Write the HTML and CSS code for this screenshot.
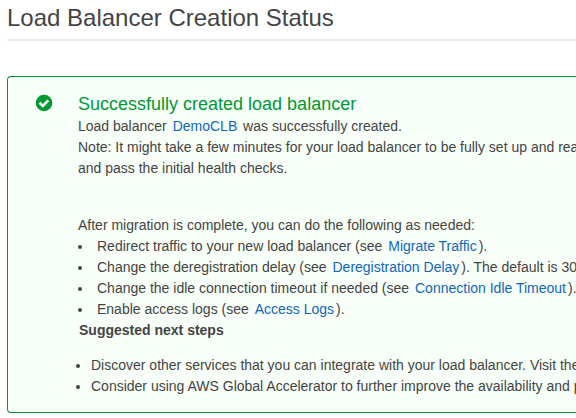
FILE: index.html
```html
<!DOCTYPE html>
<html lang="en">
<head>
<meta charset="utf-8">
<title>Load Balancer Creation Status</title>
<link rel="stylesheet" href="styles.css">
</head>
<body>
<h1 class="title">Load Balancer Creation Status</h1>
<section class="alert">
  <svg class="alert-icon" viewBox="0 0 18 18"><circle cx="9" cy="9" r="8.300"/><path d="M4.600 8.800l3.200 3.100 5.500-5.600"/></svg>
  <div class="alert-body">
    <h2 class="heading">Successfully created load balancer</h2>
    <p>Load balancer <a>DemoCLB</a> was successfully created.</p>
    <p>Note: It might take a few minutes for your load balancer to be fully set up and ready to route traffic,</p>
    <p>and pass the initial health checks.</p>
    <p class="after">After migration is complete, you can do the following as needed:</p>
    <ul class="tasks">
      <li>Redirect traffic to your new load balancer (see <a>Migrate Traffic</a>).</li>
      <li>Change the deregistration delay (see <a>Deregistration Delay</a>). The default is 300 seconds.</li>
      <li>Change the idle connection timeout if needed (see <a>Connection Idle Timeout</a>).</li>
      <li>Enable access logs (see <a>Access Logs</a>).</li>
    </ul>
    <h3 class="next">Suggested next steps</h3>
    <ul class="steps">
      <li>Discover other services that you can integrate with your load balancer. Visit the</li>
      <li>Consider using AWS Global Accelerator to further improve the availability and performance</li>
    </ul>
  </div>
</section>
</body>
</html>
```
FILE: styles.css
```css
* { box-sizing: border-box; }
body { margin: 0; height: 418px; overflow: hidden; background: #fff; color: #444; font: 14px/21px "Liberation Sans", Arial, sans-serif; }
h1, h2, h3, p, ul { margin: 0; padding: 0; font-weight: normal; }
.title { margin-left: 7px; height: 41px; padding-top: 4px; border-bottom: 2px solid #eaeaea; font-size: 24px; line-height: 28px; white-space: nowrap; }
.alert { display: flex; margin: 35px 0 0 7px; height: 337px; padding: 16px 0 0 27px; border: 1px solid #093; border-right: 0; border-radius: 4px 0 0 4px; background: #f8fff8; white-space: nowrap; overflow: hidden; }
.alert-icon { width: 18px; height: 18px; margin: 1px 25px 0 0; fill: #093; flex: none; }
.alert-icon path { fill: none; stroke: #fff; stroke-width: 2.600; }
.heading { color: #093; font-size: 18px; line-height: 22px; margin-bottom: 1px; }
a { color: #16b; margin: 0 2px; }
.after { margin-top: 36px; }
.tasks, .steps { list-style: none; }
li { position: relative; }
li::before { content: ""; position: absolute; left: 0; top: 9px; width: 4px; height: 4px; border-radius: 50%; background: #444; }
.tasks li { padding-left: 19px; }
.next { padding-left: 1px; font-size: 14px; font-weight: bold; }
.steps { margin: 14px 0 0 -2px; }
.steps li { padding-left: 15px; }
```
